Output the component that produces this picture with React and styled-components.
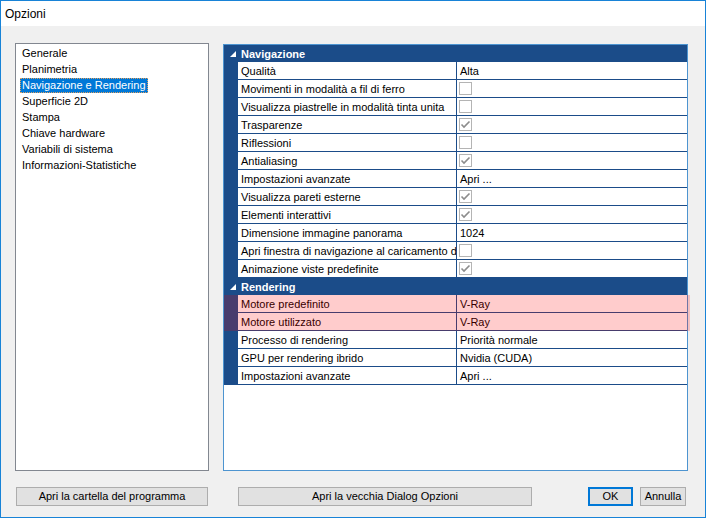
import React from 'react';
import styled, { createGlobalStyle } from 'styled-components';

const NAVY = '#1b4c89';

const Global = createGlobalStyle`
  *, *::before, *::after { box-sizing: border-box; }
  html, body { margin: 0; padding: 0; background: #f0f0f0; }
  body {
    width: 706px; height: 518px; overflow: hidden;
    font-family: "Liberation Sans", Arial, sans-serif;
  }
`;

const Window = styled.div`
  width: 706px;
  height: 518px;
  border: 1px solid #1883d7;
  background: #f0f0f0;
  display: flex;
  flex-direction: column;
`;

const TitleBar = styled.div`
  height: 25px;
  background: #fff;
  display: flex;
  align-items: center;
  padding-left: 4px;
  font-size: 12px;
  color: #000;
`;

const Main = styled.div`
  display: flex;
  align-items: flex-start;
  padding: 17px 0 0 14px;
`;

const NavList = styled.div`
  width: 194px;
  height: 428px;
  border: 1px solid #828790;
  background: #fff;
  padding: 1px 0 0 4px;
  font-size: 11px;
  color: #000;
`;

const NavItem = styled.div`
  height: 16px;
  display: flex;
  align-items: center;
`;

const NavText = styled.span`
  display: inline-block;
  height: 15px;
  line-height: 13px;
  padding: 0 1px;
  border: 1px dotted ${p => (p.$selected ? '#e0a060' : 'transparent')};
  background: ${p => (p.$selected ? '#0078d7' : 'transparent')};
  color: ${p => (p.$selected ? '#fff' : '#000')};
  white-space: nowrap;
`;

const Panel = styled.div`
  margin: 1px 0 0 14px;
  width: 465px;
  height: 427px;
  border: 1px solid #4d94d0;
  background: #fff;
`;

const CategoryHeader = styled.div`
  height: 17px;
  background: ${NAVY};
  color: #fff;
  font-weight: bold;
  font-size: 11px;
  display: flex;
  align-items: center;
  padding-left: 6px;
  gap: 5px;
`;

const Row = styled.div`
  display: grid;
  grid-template-columns: 14px 218px 1px 1fr;
  height: 18px;
`;

const Gutter = styled.div`
  background: ${NAVY};
`;

const Label = styled.div`
  border-bottom: 1px solid ${NAVY};
  padding-left: 3px;
  font-size: 11px;
  line-height: 18px;
  color: #000;
  white-space: nowrap;
  overflow: hidden;
`;

const Divider = styled.div`
  background: ${NAVY};
`;

const Value = styled.div`
  border-bottom: 1px solid ${NAVY};
  padding-left: ${p => (p.$check ? 2 : 3)}px;
  font-size: 11px;
  line-height: 18px;
  color: #000;
  display: flex;
  align-items: center;
  white-space: nowrap;
  overflow: hidden;
`;

const CheckBox = styled.span`
  width: 13px;
  height: 13px;
  border: 1px solid #b4b4b4;
  background: #fff;
  display: flex;
  align-items: center;
  justify-content: center;
`;

const HighlightGroup = styled.div`
  position: relative;
  &::after {
    content: '';
    position: absolute;
    top: 0;
    left: 0;
    right: -3px;
    bottom: 0;
    background: rgba(255, 0, 0, 0.2);
    pointer-events: none;
  }
`;

const Footer = styled.div`
  display: flex;
  align-items: center;
  padding: 16px 0 0 15px;
`;

const Button = styled.button`
  height: 19px;
  width: ${p => p.$w}px;
  margin: 0 0 0 ${p => p.$ml || 0}px;
  padding: 0;
  border: 1px solid ${p => (p.$default ? '#0078d7' : '#adadad')};
  box-shadow: ${p => (p.$default ? 'inset 0 0 0 1px #0078d7' : 'none')};
  background: #e1e1e1;
  font-family: "Liberation Sans", Arial, sans-serif;
  font-size: 11px;
  color: #000;
  line-height: 17px;
`;

const Triangle = () => (
  <svg width="6" height="6" viewBox="0 0 6 6">
    <polygon points="0,6 6,6 6,0" fill="#fff" />
  </svg>
);

const Check = ({ checked }) => (
  <CheckBox>
    {checked && (
      <svg width="11" height="11" viewBox="0 0 11 11">
        <path d="M1.5 5.5 L4 8 L9.5 2.5" fill="none" stroke="#8c8c8c" strokeWidth="1.6" />
      </svg>
    )}
  </CheckBox>
);

const PropRow = ({ label, value, check }) => (
  <Row>
    <Gutter />
    <Label>{label}</Label>
    <Divider />
    <Value $check={check !== undefined}>
      {check !== undefined ? <Check checked={check} /> : value}
    </Value>
  </Row>
);

const navItems = [
  'Generale',
  'Planimetria',
  'Navigazione e Rendering',
  'Superficie 2D',
  'Stampa',
  'Chiave hardware',
  'Variabili di sistema',
  'Informazioni-Statistiche',
];

const navRows = [
  { label: 'Qualità', value: 'Alta' },
  { label: 'Movimenti in modalità a fil di ferro', check: false },
  { label: 'Visualizza piastrelle in modalità tinta unita', check: false },
  { label: 'Trasparenze', check: true },
  { label: 'Riflessioni', check: false },
  { label: 'Antialiasing', check: true },
  { label: 'Impostazioni avanzate', value: 'Apri ...' },
  { label: 'Visualizza pareti esterne', check: true },
  { label: 'Elementi interattivi', check: true },
  { label: 'Dimensione immagine panorama', value: '1024' },
  { label: 'Apri finestra di navigazione al caricamento d', check: false },
  { label: 'Animazione viste predefinite', check: true },
];

const renderHighlighted = [
  { label: 'Motore predefinito', value: 'V-Ray' },
  { label: 'Motore utilizzato', value: 'V-Ray' },
];

const renderRows = [
  { label: 'Processo di rendering', value: 'Priorità normale' },
  { label: 'GPU per rendering ibrido', value: 'Nvidia (CUDA)' },
  { label: 'Impostazioni avanzate', value: 'Apri ...' },
];

export default function App() {
  return (
    <>
      <Global />
      <Window>
        <TitleBar>Opzioni</TitleBar>
        <Main>
          <NavList>
            {navItems.map((t, i) => (
              <NavItem key={t}>
                <NavText $selected={i === 2}>{t}</NavText>
              </NavItem>
            ))}
          </NavList>
          <Panel>
            <CategoryHeader>
              <Triangle />
              Navigazione
            </CategoryHeader>
            {navRows.map((r, i) => (
              <PropRow key={i} {...r} />
            ))}
            <CategoryHeader>
              <Triangle />
              Rendering
            </CategoryHeader>
            <HighlightGroup>
              {renderHighlighted.map((r, i) => (
                <PropRow key={i} {...r} />
              ))}
            </HighlightGroup>
            {renderRows.map((r, i) => (
              <PropRow key={i} {...r} />
            ))}
          </Panel>
        </Main>
        <Footer>
          <Button $w={192}>Apri la cartella del programma</Button>
          <Button $w={294} $ml={30}>Apri la vecchia Dialog Opzioni</Button>
          <Button $w={45} $ml={56} $default>OK</Button>
          <Button $w={46} $ml={7}>Annulla</Button>
        </Footer>
      </Window>
    </>
  );
}
